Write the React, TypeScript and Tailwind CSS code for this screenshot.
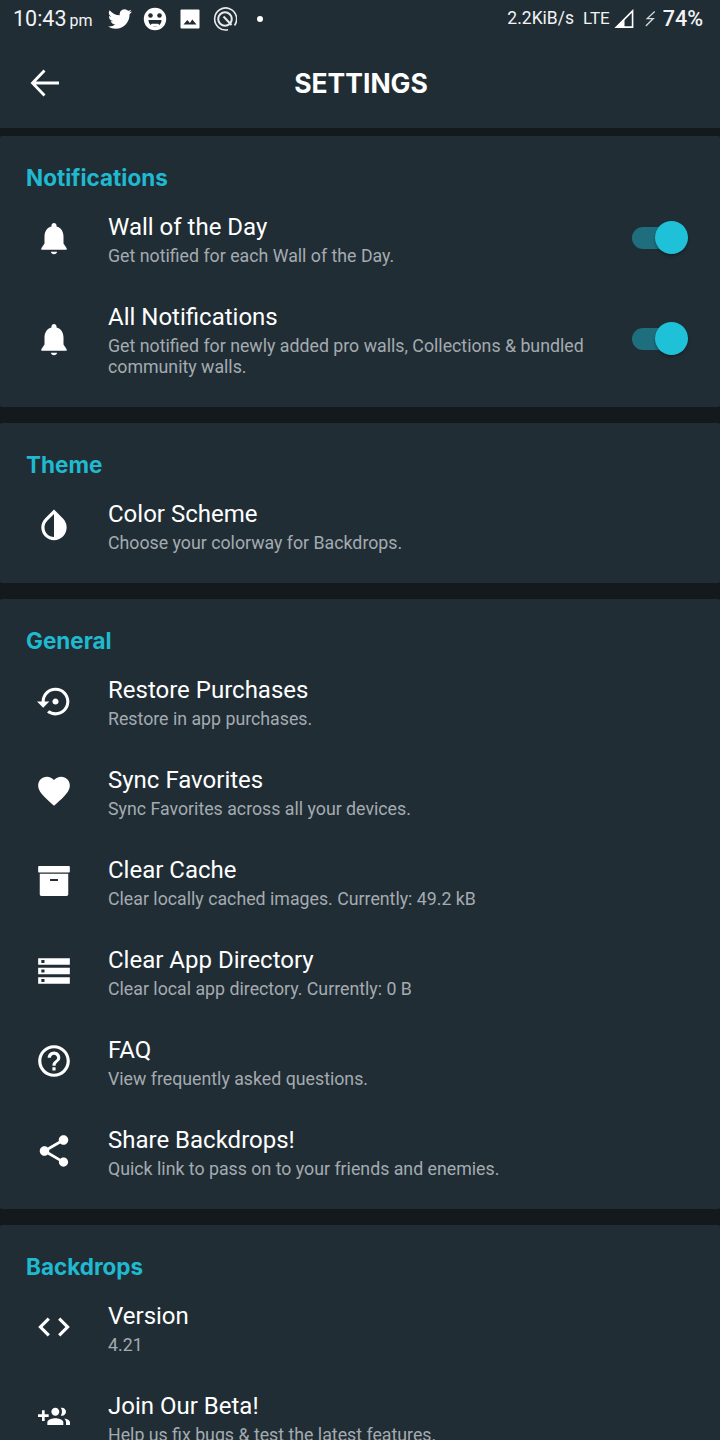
import type { ReactNode } from "react";

const ROBOTO = "font-['Roboto',sans-serif]";
const HEADING = "font-['Inter',sans-serif]";

type IconProps = { d: string; size?: number };

function Icon({ d, size = 38 }: IconProps) {
  return (
    <svg width={size} height={size} viewBox="0 0 24 24" fill="white" aria-hidden="true">
      <path d={d} />
    </svg>
  );
}

const PATHS = {
  bell: "M12 22.2c1 0 1.8-.6 2-1.5h-4c.2.9 1 1.5 2 1.5zM18 15.5V11c0-3.1-1.6-5.6-4.4-6.3v-.6c0-.9-.7-1.6-1.6-1.6s-1.6.7-1.6 1.6v.6C7.6 5.4 6 7.9 6 11v4.500L4 18.500v.9h16v-.9l-2-3z",
  drop: "M17.66 7.93L12 2.27 6.34 7.93c-3.12 3.12-3.12 8.19 0 11.31C7.9 20.8 9.95 21.58 12 21.58c2.05 0 4.1-.78 5.66-2.34 3.12-3.12 3.12-8.19 0-11.31zM12 19.59c-1.6 0-3.11-.62-4.24-1.76C6.62 16.69 6 15.19 6 13.59s.62-3.11 1.76-4.24L12 5.1v14.49z",
  restore: "M14 12c0-1.1-.9-2-2-2s-2 .9-2 2 .9 2 2 2 2-.9 2-2zm-2-9c-4.97 0-9 4.03-9 9H0l4 4 4-4H5c0-3.87 3.13-7 7-7s7 3.13 7 7-3.13 7-7 7c-1.51 0-2.91-.49-4.06-1.3l-1.42 1.44C8.04 20.3 9.94 21 12 21c4.97 0 9-4.03 9-9s-4.03-9-9-9z",
  heart: "M12 21.35l-1.45-1.32C5.4 15.36 2 12.28 2 8.5 2 5.42 4.42 3 7.5 3c1.74 0 3.41.81 4.5 2.09C13.09 3.81 14.76 3 16.5 3 19.58 3 22 5.42 22 8.5c0 3.78-3.4 6.86-8.55 11.54L12 21.35z",
  archive: "M2.500 2.600h19c.3 0 .5.2.5.5v3c0 .3-.2.5-.5.5h-19a.5.5 0 0 1-.5-.5v-3c0-.3.2-.5.5-.5zM3 7.400h18v13c0 .6-.5 1-1 1H4c-.5 0-1-.4-1-1v-13zm6.500 3.300v1.300h5v-1.300h-5z",
  storage: "M2 20h20v-4H2v4zm2-3h2v2H4v-2zM2 4v4h20V4H2zm4 3H4V5h2v2zm-4 7h20v-4H2v4zm2-3h2v2H4v-2z",
  help: "M11 18h2v-2h-2v2zm1-16C6.48 2 2 6.48 2 12s4.48 10 10 10 10-4.48 10-10S17.52 2 12 2zm0 18c-4.41 0-8-3.59-8-8s3.59-8 8-8 8 3.59 8 8-3.59 8-8 8zm0-14c-2.21 0-4 1.79-4 4h2c0-1.1.9-2 2-2s2 .9 2 2c0 2-3 1.75-3 5h2c0-2.25 3-2.5 3-5 0-2.21-1.79-4-4-4z",
  share: "M18 16.08c-.76 0-1.44.3-1.96.77L8.91 12.7c.05-.23.09-.46.09-.7s-.04-.47-.09-.7l7.05-4.11c.54.5 1.25.81 2.04.81 1.66 0 3-1.34 3-3s-1.34-3-3-3-3 1.34-3 3c0 .24.04.47.09.7L8.04 9.81C7.5 9.31 6.79 9 6 9c-1.66 0-3 1.34-3 3s1.34 3 3 3c.79 0 1.5-.31 2.04-.81l7.12 4.16c-.05.21-.08.43-.08.65 0 1.61 1.31 2.92 2.92 2.92 1.61 0 2.92-1.31 2.92-2.92s-1.31-2.92-2.92-2.92z",
  code: "M9.4 16.6L4.8 12l4.6-4.6L8 6l-6 6 6 6 1.4-1.4zm5.2 0l4.6-4.6-4.6-4.6L16 6l6 6-6 6-1.4-1.4z",
};

const GROUP_ADD =
  "M8 10H5V7H3v3H0v2h3v3h2v-3h3v-2zm10 1c1.66 0 2.99-1.34 2.99-3S19.66 5 18 5c-.32 0-.63.05-.91.14.57.81.9 1.79.9 2.86s-.34 2.04-.9 2.86c.28.09.59.14.91.14zm-5 0c1.66 0 2.99-1.34 2.99-3S14.66 5 13 5c-1.66 0-3 1.34-3 3s1.34 3 3 3zm6.62 2.16c.83.73 1.38 1.66 1.38 2.84v2h3v-2c0-1.54-2.37-2.49-4.38-2.84zM13 13c-2 0-6 1-6 3v2h12v-2c0-2-4-3-6-3z";

function StatusBar() {
  return (
    <div className={`flex h-[38px] items-center justify-between pl-[13px] pr-[17px] text-[#f1f3f4] ${ROBOTO}`}>
      <div className="flex items-center">
        <span className="w-[95px] text-[21.500px] leading-none">
          10:43<span className="ml-[3px] text-[16px]">pm</span>
        </span>
        <div className="flex items-center gap-[11px]">
          <svg width="24" height="20" viewBox="0 0 24 20" fill="white" aria-hidden="true">
            <path d="M23.950 2.570a9.800 9.800 0 0 1-2.830.780 4.930 4.930 0 0 0 2.160-2.720 9.900 9.900 0 0 1-3.120 1.190 4.920 4.920 0 0 0-8.380 4.480A13.940 13.940 0 0 1 1.670 1.150a4.920 4.920 0 0 0 1.520 6.570 4.900 4.900 0 0 1-2.230-.620v.060a4.920 4.920 0 0 0 3.950 4.830 5 5 0 0 1-2.210.080 4.940 4.940 0 0 0 4.600 3.420A9.870 9.870 0 0 1 0 17.530a13.900 13.900 0 0 0 7.550 2.210c9.050 0 14-7.500 14-13.980 0-.210 0-.420-.020-.630a10 10 0 0 0 2.420-2.560z" />
          </svg>
          <svg width="24" height="24" viewBox="0 0 24 24" aria-hidden="true">
            <circle cx="12" cy="12" r="11.200" fill="white" />
            <circle cx="7.500" cy="8.500" r="2.300" fill="#212d35" />
            <circle cx="16.500" cy="8.500" r="2.300" fill="#212d35" />
            <path d="M5.500 13h13c0 4-3 6.500-6.500 6.500S5.500 17 5.500 13z" fill="#212d35" />
            <rect x="8" y="16.800" width="8" height="2.700" rx="1.300" fill="white" />
          </svg>
          <svg width="24" height="24" viewBox="0 0 24 24" aria-hidden="true">
            <rect x="2.500" y="2.500" width="19" height="19" rx="1" fill="white" />
            <path d="M5.500 17.500l3.800-4.600 2.600 3 2.400-3.300 4.200 4.900z" fill="#212d35" />
          </svg>
          <svg width="24" height="24" viewBox="0 0 24 24" fill="none" stroke="#e8eaeb" aria-hidden="true">
            <path d="M21.500 18.500A11 11 0 1 0 15 22.700" strokeWidth="1.600" />
            <circle cx="12" cy="12" r="6.800" strokeWidth="2" />
            <path d="M10.500 9.500l8 8.500" strokeWidth="2" />
          </svg>
        </div>
        <span className="ml-[20px] size-[6px] rounded-full bg-white" />
      </div>
      <div className="flex items-center">
        <span className="text-[17.500px] leading-none">2.2KiB/s</span>
        <span className="ml-[9px] -translate-y-[1px] text-[17px] leading-none">LTE</span>
        <svg className="ml-[4px]" width="20" height="20" viewBox="0 0 21 20" fill="none" aria-hidden="true">
          <path d="M19.500 1.500V18.500H2.500z" stroke="white" strokeWidth="1.700" />
          <path d="M1 19.500L11 9.500V19.500z" fill="white" />
        </svg>
        <svg className="ml-[10px]" width="13" height="18" viewBox="0 0 14 18" fill="none" stroke="#d5d8da" strokeWidth="1.400" aria-hidden="true">
          <path d="M11.500 1L3.500 8.500H10L2 16.500" />
        </svg>
        <span className="ml-[6px] text-[21.500px] font-medium leading-none">74%</span>
      </div>
    </div>
  );
}

function Toolbar() {
  return (
    <header className="flex h-[128px] flex-col bg-[#212d35]">
      <StatusBar />
      <div className="grid flex-1 grid-cols-[1fr_auto_1fr] items-center">
        <svg className="ml-[30px]" width="30" height="28" viewBox="0 0 30 28" fill="none" stroke="white" strokeWidth="2.800" aria-hidden="true">
          <path d="M29 14H3M14.500 1.500L2.500 14l12 12.500" />
        </svg>
        <h1 className={`pl-[2px] text-[26.500px] font-bold leading-none text-white ${HEADING}`}>SETTINGS</h1>
      </div>
    </header>
  );
}

function Toggle() {
  return (
    <div className="relative mr-[40px] h-[22px] w-[48px] shrink-0 rounded-full bg-[#1f6e7e]">
      <span className="absolute -right-[8px] -top-[6px] size-[33px] rounded-full bg-[#1fc1d8] shadow-[0_2px_3px_rgba(0,0,0,0.3)]" />
    </div>
  );
}

type RowProps = { icon: ReactNode; title: string; subtitle: string; toggle?: boolean };

function Row({ icon, title, subtitle, toggle }: RowProps) {
  return (
    <div className="flex items-center py-[16px] pl-[35px]">
      <div className="flex w-[38px] shrink-0 items-center justify-center">{icon}</div>
      <div className={`ml-[35px] min-w-0 flex-1 pt-[3px] ${ROBOTO}`}>
        <p className="text-[24px] leading-[30px] text-white">{title}</p>
        <p className="mt-[4px] whitespace-pre-line text-[17.750px] leading-[21px] text-[#a4abb0]">{subtitle}</p>
      </div>
      {toggle && <Toggle />}
    </div>
  );
}

function Section({ title, children }: { title: string; children: ReactNode }) {
  return (
    <section className="rounded-[2px] bg-[#212d35] pb-[13px] pt-[28px]">
      <h2 className={`pb-[1px] pl-[26px] text-[22.500px] font-bold leading-[28px] text-[#1fb9d0] ${HEADING}`}>{title}</h2>
      {children}
    </section>
  );
}

export default function App() {
  return (
    <div className="h-[1440px] w-[720px] overflow-hidden bg-[#14191d]">
      <Toolbar />
      <div className="mt-[8px] flex flex-col gap-[16px]">
        <Section title="Notifications">
          <Row icon={<Icon d={PATHS.bell} />} title="Wall of the Day" subtitle="Get notified for each Wall of the Day." toggle />
          <Row
            icon={<Icon d={PATHS.bell} />}
            title="All Notifications"
            subtitle={"Get notified for newly added pro walls, Collections & bundled\ncommunity walls."}
            toggle
          />
        </Section>
        <Section title="Theme">
          <Row icon={<Icon d={PATHS.drop} />} title="Color Scheme" subtitle="Choose your colorway for Backdrops." />
        </Section>
        <Section title="General">
          <Row icon={<span className="ml-[3px]"><Icon d={PATHS.restore} size={37} /></span>} title="Restore Purchases" subtitle="Restore in app purchases." />
          <Row icon={<Icon d={PATHS.heart} />} title="Sync Favorites" subtitle="Sync Favorites across all your devices." />
          <Row icon={<Icon d={PATHS.archive} />} title="Clear Cache" subtitle="Clear locally cached images. Currently: 49.2 kB" />
          <Row icon={<Icon d={PATHS.storage} />} title="Clear App Directory" subtitle="Clear local app directory. Currently: 0 B" />
          <Row icon={<Icon d={PATHS.help} />} title="FAQ" subtitle="View frequently asked questions." />
          <Row icon={<Icon d={PATHS.share} />} title="Share Backdrops!" subtitle="Quick link to pass on to your friends and enemies." />
        </Section>
        <Section title="Backdrops">
          <Row icon={<Icon d={PATHS.code} />} title="Version" subtitle="4.21" />
          <Row icon={<Icon d={GROUP_ADD} size={32} />} title="Join Our Beta!" subtitle="Help us fix bugs & test the latest features." />
        </Section>
      </div>
    </div>
  );
}
